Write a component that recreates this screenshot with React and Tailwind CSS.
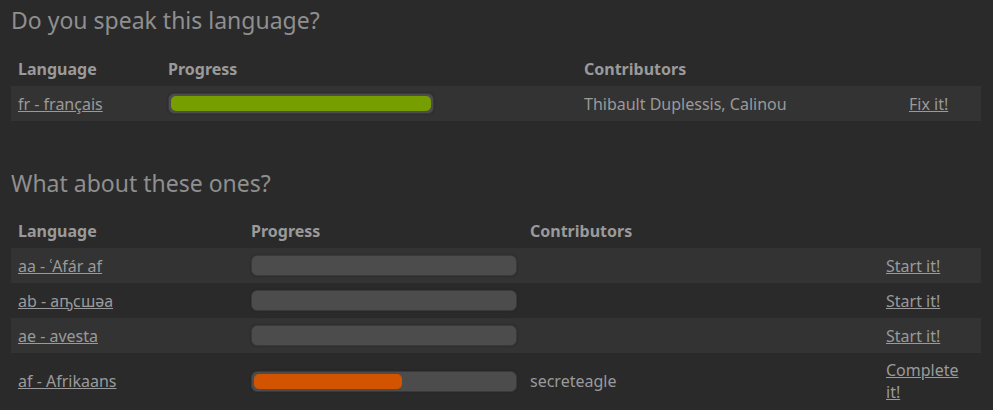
import React from "react";

const font = { fontFamily: '"Noto Sans", "Open Sans", sans-serif' };

function Bar({ pct, color }) {
  return (
    <div className="w-[266px] h-[21px] rounded-[6px] bg-[#4c4c4c] border border-[#3a3a3a] p-[2px] shadow-[0_0_2px_#222]">
      {pct > 0 && (
        <div className={`h-full rounded-[5px] ${color}`} style={{ width: pct + "%" }} />
      )}
    </div>
  );
}

function Table({ cols, rows, headers }) {
  return (
    <div className="w-[970px] ml-[11px]">
      <div className="flex h-[34px] items-center font-bold text-[16px]">
        {headers.map((h, i) => (
          <div key={i} className="px-[7px]" style={{ width: cols[i] }}>{h}</div>
        ))}
      </div>
      {rows.map((r, ri) => (
        <div key={ri} className={`flex items-center min-h-[35px] py-[6px] leading-[22px] text-[16px] ${ri % 2 === 0 ? "bg-[#333333]" : ""}`}>
          <div className="px-[7px] shrink-0" style={{ width: cols[0] }}><a className="underline">{r.lang}</a></div>
          <div className="px-[7px] shrink-0" style={{ width: cols[1] }}><Bar pct={r.pct} color={r.color} /></div>
          <div className="px-[7px] shrink-0" style={{ width: cols[2] }}>{r.contrib}</div>
          <div className="px-[7px] shrink-0" style={{ width: cols[3] }}><a className="underline">{r.action}</a></div>
        </div>
      ))}
    </div>
  );
}

export default function App() {
  return (
    <div className="w-[993px] h-[410px] overflow-hidden bg-[#2a2a2a] text-[#9a9a9a]" style={font}>
      <h2 className="text-[23px] leading-[32px] pt-[4px] pl-[11px] text-[#8f8f8f]">Do you speak this language?</h2>
      <div className="mt-[16px]">
        <Table
          cols={[150, 416, 325, 79]}
          headers={["Language", "Progress", "Contributors", ""]}
          rows={[{ lang: "fr - français", pct: 100, color: "bg-[#779e00]", contrib: "Thibault Duplessis, Calinou", action: "Fix it!" }]}
        />
      </div>
      <h2 className="text-[23px] leading-[32px] mt-[46px] pl-[11px] text-[#8f8f8f]">What about these ones?</h2>
      <div className="mt-[15px]">
        <Table
          cols={[233, 279, 356, 102]}
          headers={["Language", "Progress", "Contributors", ""]}
          rows={[
            { lang: "aa - ʿAfár af", pct: 0, contrib: "", action: "Start it!" },
            { lang: "ab - аҧсшәа", pct: 0, contrib: "", action: "Start it!" },
            { lang: "ae - avesta", pct: 0, contrib: "", action: "Start it!" },
            { lang: "af - Afrikaans", pct: 57, color: "bg-[#d35400]", contrib: "secreteagle", action: "Complete it!" },
          ]}
        />
      </div>
    </div>
  );
}
